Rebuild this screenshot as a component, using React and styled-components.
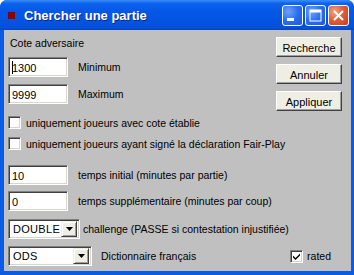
import React from "react";
import styled, { createGlobalStyle } from "styled-components";

const Global = createGlobalStyle`
  html, body { margin: 0; padding: 0; background: #ffffff; }
  body { font-family: "Liberation Sans", Arial, sans-serif; }
`;

const Window = styled.div`
  width: 354px;
  height: 275px;
  box-sizing: border-box;
  display: flex;
  flex-direction: column;
  background: #0a5be6;
  border-radius: 7px 7px 0 0;
  overflow: hidden;
`;

const TitleBar = styled.div`
  height: 30px;
  flex: none;
  display: flex;
  align-items: center;
  padding: 0 5px 0 8px;
  background: linear-gradient(
    to bottom,
    #3d8cf6 0%,
    #0a62ee 12%,
    #0557e4 40%,
    #0353e0 75%,
    #0650d4 92%,
    #0544c0 100%
  );
  gap: 9px;
`;

const AppIcon = styled.div`
  width: 7px;
  height: 7px;
  background: #8a0000;
  margin-top: 1px;
`;

const Title = styled.div`
  flex: 1;
  color: #ffffff;
  font-family: "Liberation Sans", Arial, sans-serif;
  font-weight: bold;
  font-size: 13px;
  text-shadow: 1px 1px 0 #0a2a8a;
  margin-top: 1px;
`;

const TitleButtons = styled.div`
  display: flex;
  gap: 2px;
  margin-top: 1px;
`;

const TitleBtn = styled.div`
  width: 21px;
  height: 21px;
  box-sizing: border-box;
  border: 1px solid #ffffff;
  border-radius: 3px;
  display: flex;
  align-items: center;
  justify-content: center;
  background: ${(p) =>
    p.$close
      ? "radial-gradient(circle at 30% 30%, #f2a48a 0%, #e0603c 45%, #c63d1a 100%)"
      : "radial-gradient(circle at 30% 30%, #6ea2fa 0%, #2b6ef0 50%, #1c56de 100%)"};
`;

const Client = styled.div`
  flex: 1;
  margin: 0 3px 4px 4px;
  background: #c0c0c0;
  padding: 7px 0 0 4px;
  display: flex;
  flex-direction: column;
  font-size: 10.5px;
  color: #000;
`;

const Top = styled.div`
  display: flex;
  justify-content: space-between;
  align-items: flex-start;
`;

const LeftCol = styled.div`
  display: flex;
  flex-direction: column;
`;

const ButtonCol = styled.div`
  display: flex;
  flex-direction: column;
  gap: 7px;
  padding-right: 9px;
  margin-bottom: -7px;
`;

const Button = styled.div`
  width: 66px;
  height: 20px;
  box-sizing: border-box;
  background: #efeee4;
  border-top: 1px solid #ffffff;
  border-left: 1px solid #ffffff;
  border-right: 1px solid #404040;
  border-bottom: 1px solid #404040;
  box-shadow: inset -1px -1px 0 #a0a0a0;
  display: flex;
  align-items: center;
  justify-content: center;
  font-size: 11px;
  color: #000;
  padding-top: 1px;
`;

const Label = styled.div`
  height: 13px;
  line-height: 13px;
  padding-left: 2px;
`;

const Row = styled.div`
  display: flex;
  align-items: center;
  margin-top: ${(p) => p.$mt || 0}px;
`;

const Input = styled.div`
  width: ${(p) => p.$w || 60}px;
  height: 20px;
  box-sizing: border-box;
  background: #ffffff;
  border-top: 1px solid #808080;
  border-left: 1px solid #808080;
  border-right: 1px solid #ffffff;
  border-bottom: 1px solid #ffffff;
  box-shadow: inset 1px 1px 0 #404040, inset -1px -1px 0 #d8d6cc;
  padding: 1px 0 0 3px;
  display: flex;
  align-items: center;
  font-size: 11px;
  flex: none;
`;

const Caret = styled.span`
  display: inline-block;
  width: 1px;
  height: 13px;
  background: #000;
  margin-right: -1px;
`;

const FieldText = styled.span`
  margin-left: ${(p) => p.$ml || 10}px;
`;

const Box = styled.div`
  width: 13px;
  height: 13px;
  box-sizing: border-box;
  background: #ffffff;
  border-top: 1px solid #808080;
  border-left: 1px solid #808080;
  border-right: 1px solid #ffffff;
  border-bottom: 1px solid #ffffff;
  box-shadow: inset 1px 1px 0 #404040, inset -1px -1px 0 #d8d6cc;
  flex: none;
  display: flex;
  align-items: center;
  justify-content: center;
`;

const Select = styled.div`
  width: ${(p) => p.$w}px;
  height: 20px;
  box-sizing: border-box;
  background: #ffffff;
  border-top: 1px solid #808080;
  border-left: 1px solid #808080;
  border-right: 1px solid #ffffff;
  border-bottom: 1px solid #ffffff;
  box-shadow: inset 1px 1px 0 #404040, inset -1px -1px 0 #d8d6cc;
  display: flex;
  align-items: center;
  padding: 2px 2px 2px 4px;
  font-size: 11px;
  flex: none;
`;

const SelectText = styled.span`
  flex: 1;
  letter-spacing: 0.3px;
`;

const Arrow = styled.div`
  width: 16px;
  height: 16px;
  box-sizing: border-box;
  background: #efeee4;
  border-top: 1px solid #efeee4;
  border-left: 1px solid #efeee4;
  border-right: 1px solid #404040;
  border-bottom: 1px solid #404040;
  box-shadow: inset 1px 1px 0 #ffffff, inset -1px -1px 0 #a0a0a0;
  display: flex;
  align-items: center;
  justify-content: center;
`;

const Spacer = styled.div`
  flex: 1;
`;

const RightGap = styled.div`
  width: 20px;
  flex: none;
`;

const Check = () => (
  <svg width="9" height="9" viewBox="0 0 9 9">
    <path d="M1 3.5 L3.5 6 L8 1.5 L8 3.5 L3.5 8 L1 5.5 Z" fill="#000" />
  </svg>
);

const Tri = () => (
  <svg width="7" height="4" viewBox="0 0 7 4">
    <path d="M0 0 H7 L3.5 4 Z" fill="#000" />
  </svg>
);

export default function App() {
  return (
    <>
      <Global />
      <Window>
        <TitleBar>
          <AppIcon />
          <Title>Chercher une partie</Title>
          <TitleButtons>
            <TitleBtn>
              <svg width="19" height="19" viewBox="0 0 19 19">
                <rect x="4" y="12" width="7" height="3" fill="#fff" />
              </svg>
            </TitleBtn>
            <TitleBtn>
              <svg width="19" height="19" viewBox="0 0 19 19">
                <rect x="4" y="4" width="11" height="11" fill="none" stroke="#fff" strokeWidth="1" />
                <rect x="4" y="4" width="11" height="2.5" fill="#fff" />
              </svg>
            </TitleBtn>
            <TitleBtn $close>
              <svg width="19" height="19" viewBox="0 0 19 19">
                <path d="M5 5 L14 14 M14 5 L5 14" stroke="#fff" strokeWidth="2" />
              </svg>
            </TitleBtn>
          </TitleButtons>
        </TitleBar>
        <Client>
          <Top>
            <LeftCol>
              <Label>Cote adversaire</Label>
              <Row $mt={7}>
                <Input>
                  <Caret />1300
                </Input>
                <FieldText>Minimum</FieldText>
              </Row>
              <Row $mt={7}>
                <Input>9999</Input>
                <FieldText>Maximum</FieldText>
              </Row>
            </LeftCol>
            <ButtonCol>
              <Button>Recherche</Button>
              <Button>Annuler</Button>
              <Button>Appliquer</Button>
            </ButtonCol>
          </Top>
          <Row $mt={12}>
            <Box />
            <FieldText $ml={5}>uniquement joueurs avec cote établie</FieldText>
          </Row>
          <Row $mt={8}>
            <Box />
            <FieldText $ml={5}>
              uniquement joueurs ayant signé la déclaration Fair-Play
            </FieldText>
          </Row>
          <Row $mt={15}>
            <Input>10</Input>
            <FieldText>temps initial (minutes par partie)</FieldText>
          </Row>
          <Row $mt={6}>
            <Input>0</Input>
            <FieldText>temps supplémentaire (minutes par coup)</FieldText>
          </Row>
          <Row $mt={8}>
            <Select $w={72}>
              <SelectText>DOUBLE</SelectText>
              <Arrow>
                <Tri />
              </Arrow>
            </Select>
            <FieldText $ml={3}>
              challenge (PASSE si contestation injustifiée)
            </FieldText>
          </Row>
          <Row $mt={7}>
            <Select $w={84}>
              <SelectText>ODS</SelectText>
              <Arrow>
                <Tri />
              </Arrow>
            </Select>
            <FieldText $ml={9}>Dictionnaire français</FieldText>
            <Spacer />
            <Box>
              <Check />
            </Box>
            <FieldText $ml={4}>rated</FieldText>
            <RightGap />
          </Row>
        </Client>
      </Window>
    </>
  );
}
